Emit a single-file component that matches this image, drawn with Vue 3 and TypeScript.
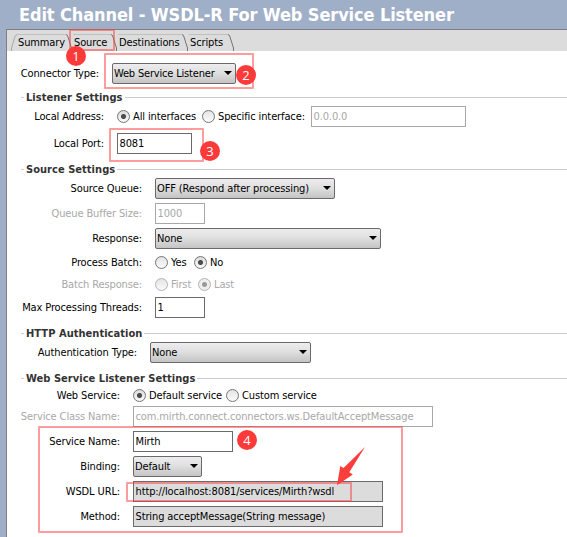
<script setup lang="ts">
interface Option { label: string; on?: boolean; width?: number }
interface Row {
  label: string
  kind: 'select' | 'input' | 'radio'
  value?: string
  width?: number
  options?: Option[]
  extra?: { value: string; width: number }
  disabled?: boolean
  readonly?: boolean
  gap: number
}
interface Section { title: string; labelWidth: number; gap: number; rows: Row[] }

const tabs = [
  { label: 'Summary', width: 56 },
  { label: 'Source', width: 45 },
  { label: 'Destinations', width: 71 },
  { label: 'Scripts', width: 46 },
]

const sections: Section[] = [
  {
    title: 'Listener Settings', labelWidth: 98, gap: 8, rows: [
      {
        label: 'Local Address:', kind: 'radio', gap: 3,
        options: [{ label: 'All interfaces', on: true, width: 85 }, { label: 'Specific interface:', width: 109 }],
        extra: { value: '0.0.0.0', width: 155 },
      },
      { label: 'Local Port:', kind: 'input', value: '8081', width: 75, gap: 6 },
    ],
  },
  {
    title: 'Source Settings', labelWidth: 136, gap: 10, rows: [
      { label: 'Source Queue:', kind: 'select', value: 'OFF (Respond after processing)', width: 180, gap: 3 },
      { label: 'Queue Buffer Size:', kind: 'input', value: '1000', width: 50, disabled: true, gap: 4 },
      { label: 'Response:', kind: 'select', value: 'None', width: 226, gap: 4 },
      { label: 'Process Batch:', kind: 'radio', options: [{ label: 'Yes', width: 39 }, { label: 'No', on: true }], gap: 3 },
      { label: 'Batch Response:', kind: 'radio', options: [{ label: 'First', width: 43 }, { label: 'Last', on: true }], disabled: true, gap: 1 },
      { label: 'Max Processing Threads:', kind: 'input', value: '1', width: 50, gap: 2 },
    ],
  },
  {
    title: 'HTTP Authentication', labelWidth: 131, gap: 10, rows: [
      { label: 'Authentication Type:', kind: 'select', value: 'None', width: 161, gap: 3 },
    ],
  },
  {
    title: 'Web Service Listener Settings', labelWidth: 114, gap: 10, rows: [
      { label: 'Web Service:', kind: 'radio', options: [{ label: 'Default service', on: true, width: 93 }, { label: 'Custom service' }], gap: 1 },
      { label: 'Service Class Name:', kind: 'input', value: 'com.mirth.connect.connectors.ws.DefaultAcceptMessage', width: 300, disabled: true, gap: 0 },
      { label: 'Service Name:', kind: 'input', value: 'Mirth', width: 100, gap: 4 },
      { label: 'Binding:', kind: 'select', value: 'Default', width: 69, gap: 4 },
      { label: 'WSDL URL:', kind: 'input', value: 'http://localhost:8081/services/Mirth?wsdl', width: 250, readonly: true, gap: 4 },
      { label: 'Method:', kind: 'input', value: 'String acceptMessage(String message)', width: 250, readonly: true, gap: 4 },
    ],
  },
]
</script>

<template>
  <div class="window">
    <h1 class="title">Edit Channel - WSDL-R For Web Service Listener</h1>
    <div class="panel">
      <nav class="tabs">
        <div v-for="(t, i) in tabs" :key="t.label" class="tab" :style="{ width: t.width + 'px' }">
          <svg v-if="i === 0" class="slope first" width="6" height="17" viewBox="0 0 6 17"><path d="M.5 17V14L3.5 4Q4 1 6 .5" fill="none" stroke="#a8a8a8" /></svg>
          {{ t.label }}
          <svg class="slope" width="7" height="17" viewBox="0 0 7 17"><path d="M0 .5Q1.5 .5 2 3L5.5 14V17" fill="none" stroke="#747474" /></svg>
        </div>
      </nav>
      <div class="form">
        <div class="row connector">
          <span class="label connector-label">Connector Type:</span>
          <div class="select connector-select">Web Service Listener<i class="arrow" /></div>
        </div>
        <section v-for="s in sections" :key="s.title">
          <h2 class="legend" :style="{ marginTop: s.gap + 'px' }"><span>{{ s.title }}</span></h2>
          <div v-for="r in s.rows" :key="r.label" class="row" :class="{ disabled: r.disabled }" :style="{ marginTop: r.gap + 'px' }">
            <span class="label" :style="{ width: s.labelWidth + 'px' }">{{ r.label }}</span>
            <div v-if="r.kind === 'select'" class="select" :style="{ width: r.width + 'px' }">{{ r.value }}<i class="arrow" /></div>
            <div v-else-if="r.kind === 'input'" class="input" :class="{ readonly: r.readonly }" :style="{ width: r.width + 'px' }">{{ r.value }}</div>
            <template v-else>
              <span v-for="o in r.options" :key="o.label" class="option" :style="{ width: o.width ? o.width + 'px' : 'auto' }">
                <i class="radio" :class="{ on: o.on }" />{{ o.label }}
              </span>
              <div v-if="r.extra" class="input ghost" :style="{ width: r.extra.width + 'px' }">{{ r.extra.value }}</div>
            </template>
          </div>
        </section>
      </div>
    </div>

    <i class="mark m-tab" /><i class="mark m-connector" /><i class="mark m-port" /><i class="mark m-service" /><i class="mark m-url" />
    <b class="badge b1">1</b><b class="badge b2">2</b><b class="badge b3">3</b><b class="badge b4">4</b>
    <svg class="pointer" width="30" height="42" viewBox="0 0 30 42"><path d="M28 1L12.3 26.2L15.8 28.5L0 39.3L3.3 20L6.5 22Z" fill="#fb3d3c" /></svg>
  </div>
</template>

<style>
body { margin: 0; overflow: hidden; }
</style>

<style scoped>
.window { position: relative; width: 567px; height: 537px; overflow: hidden; background: #9fafc8; font-family: "DejaVu Sans Condensed", "DejaVu Sans", sans-serif; font-stretch: condensed; font-size: 11px; letter-spacing: -0.12px; color: #000; box-sizing: border-box; }
.window * { box-sizing: border-box; }
.title { margin: 0; height: 29px; padding-left: 19px; font: bold 18px/29px "DejaVu Sans Condensed", "DejaVu Sans", sans-serif; font-stretch: condensed; letter-spacing: -0.11px; color: #fff; white-space: nowrap; }
.panel { margin-left: 6px; height: 508px; background: #fff; border-left: 1px solid #808080; border-top: 1px solid #808080; }
.tabs { display: flex; height: 21px; padding: 4px 0 0 4px; background: #dcdcdc; }
.tab { position: relative; height: 17px; padding-left: 7px; line-height: 17px; white-space: nowrap; }
.tab::before { content: ""; position: absolute; left: 6px; right: 1px; top: 0; height: 1px; background: #c0c0c0; }
.slope { position: absolute; right: -6px; top: 0; }
.slope.first { left: 0; right: auto; }
.form { padding-top: 12px; margin-left: -1px; }
.row { display: flex; align-items: center; height: 21px; white-space: nowrap; }
.label { flex: none; margin-right: 13px; text-align: right; }
.connector-label { width: 93px; }
.connector-select { width: 124px; letter-spacing: -0.18px; }
.legend { display: flex; align-items: center; height: 11px; margin: 0; padding-left: 15px; font-size: 11px; font-weight: bold; letter-spacing: 0.04px; color: #333; white-space: nowrap; }
.legend::before { content: ""; width: 3px; height: 1px; margin-right: 2px; background: #ccc; }
.legend::after { content: ""; flex: 1; height: 1px; margin-left: 2px; background: #ccc; }
.select, .input { flex: none; display: flex; align-items: center; height: 21px; }
.input { border: 1px solid #6b696b; padding-left: 1.5px; background: #fff; }
.select { position: relative; border: 1px solid #6b696b; border-radius: 2px; padding-left: 1px; background: linear-gradient(#eeecee, #e0e0e0 45%, #c4c4c4); }
.arrow { position: absolute; right: 3px; top: 7px; border: 4px solid transparent; border-top-color: #000; border-bottom: 0; }
.readonly { background: #dcdcdc; }
.option { display: flex; align-items: center; gap: 3px; }
.radio { flex: none; width: 13px; height: 13px; border: 1px solid #747474; border-radius: 50%; background: linear-gradient(#e4e4e4, #fafafa); }
.radio.on { background: radial-gradient(circle, #555 0, #444 2px, rgba(68, 68, 68, 0) 3px), linear-gradient(#dcdcdc, #fafafa); }
.disabled, .ghost { color: #a8a8a8; }
.disabled .input, .ghost { border-color: #a8a8a8; }
.disabled .radio { border-color: #b4b4b4; }
.disabled .radio.on { background: radial-gradient(circle, #999 0, #999 2px, rgba(160, 160, 160, 0) 3px), #eee; }
.mark { position: absolute; border: 2px solid rgba(250, 60, 60, .5); border-radius: 1px; }
.m-tab { left: 69px; top: 29px; width: 46px; height: 22px; }
.m-connector { left: 104px; top: 53px; width: 150px; height: 36px; }
.m-port { left: 109px; top: 128px; width: 95px; height: 34px; }
.m-service { left: 38px; top: 426px; width: 365px; height: 107px; }
.m-url { left: 126px; top: 482px; width: 226px; height: 20px; }
.badge { position: absolute; width: 20px; height: 20px; border-radius: 50%; background: #fc3a3a; color: #fff; text-align: center; font: 13px/20px "Open Sans", sans-serif; }
.b1 { left: 66px; top: 46px; }
.b2 { left: 236px; top: 65px; }
.b3 { left: 200px; top: 141px; }
.b4 { left: 237px; top: 430px; }
.pointer { position: absolute; left: 337px; top: 446px; }
</style>
